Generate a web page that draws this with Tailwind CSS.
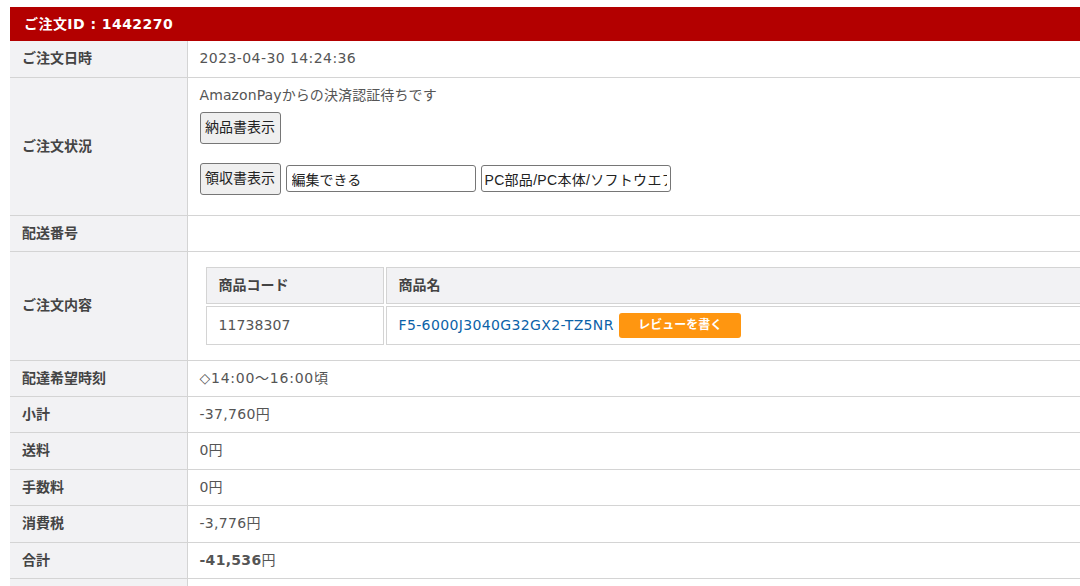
<!DOCTYPE html>
<html lang="ja">
<head>
  <meta charset="UTF-8" />
  <title>ご注文詳細</title>
  <script src="https://cdn.jsdelivr.net/npm/@tailwindcss/browser@4"></script>
</head>
<body class="bg-white overflow-hidden h-[586px] font-['DejaVu_Sans','Noto_Sans_CJK_JP',sans-serif] text-[14px] text-[#555]">
  <div class="pt-[7px] pl-[10px] w-[1200px]">
    <div class="h-[34px] bg-[#b30000] text-white font-bold flex items-center pl-[14px] tracking-[0.45px]">ご注文ID : 1442270</div>

    <table class="w-full border-collapse table-fixed">
      <tbody>
        <tr class="h-[36px] border-b border-[#d4d4d4]">
          <th class="w-[177px] bg-[#f2f2f4] border-r border-[#d4d4d4] text-left pl-[12px] text-[#444]">ご注文日時</th>
          <td class="pl-[12px] tracking-[0.42px]">2023-04-30 14:24:36</td>
        </tr>
        <tr class="h-[138px] border-b border-[#d4d4d4]">
          <th class="bg-[#f2f2f4] border-r border-[#d4d4d4] text-left pl-[12px] text-[#444]">ご注文状況</th>
          <td class="pl-[12px] align-top">
            <p class="mt-[7px] leading-[20px] tracking-[0.1px]">AmazonPayからの決済認証待ちです</p>
            <button class="block mt-[7px] w-[81px] h-[32px] bg-[#efefef] border border-[#767676] rounded-[3px] text-[#222] text-[14px]">納品書表示</button>
            <div class="flex items-center gap-[5px] mt-[19px]">
              <button class="w-[81px] h-[32px] bg-[#efefef] border border-[#767676] rounded-[3px] text-[#222] text-[14px]">領収書表示</button>
              <input value="編集できる" class="w-[190px] h-[27px] px-[5px] bg-white border border-[#767676] rounded-[3px] text-[#222] text-[14px]" />
              <input value="PC部品/PC本体/ソフトウエア" class="w-[190px] h-[27px] px-[3px] bg-white border border-[#767676] rounded-[3px] text-[#222] text-[14px] tracking-[0.3px] font-['Liberation_Sans','Noto_Sans_CJK_JP',sans-serif]" />
            </div>
          </td>
        </tr>
        <tr class="h-[36px] border-b border-[#d4d4d4]">
          <th class="bg-[#f2f2f4] border-r border-[#d4d4d4] text-left pl-[12px] text-[#444]">配送番号</th>
          <td></td>
        </tr>
        <tr class="h-[109px] border-b border-[#d4d4d4]">
          <th class="bg-[#f2f2f4] border-r border-[#d4d4d4] text-left pl-[12px] text-[#444]">ご注文内容</th>
          <td class="pl-[16px]">
            <table class="w-[1000px] border-separate border-spacing-[2px] table-fixed -my-[2px]">
              <tbody>
                <tr class="h-[37px]">
                  <th class="w-[178px] bg-[#f2f2f4] border border-[#d4d4d4] text-left pl-[12px] text-[#444]">商品コード</th>
                  <th class="bg-[#f2f2f4] border border-[#d4d4d4] text-left pl-[12px] text-[#444]">商品名</th>
                </tr>
                <tr class="h-[39px]">
                  <td class="border border-[#d4d4d4] pl-[12px] tracking-[0.1px]">11738307</td>
                  <td class="border border-[#d4d4d4] pl-[12px]">
                    <a href="#" class="text-[#0b62a8] tracking-[0.37px]">F5-6000J3040G32GX2-TZ5NR</a>
                    <a href="#" class="inline-block align-middle ml-[1px] w-[122px] h-[25px] leading-[25px] bg-[#ff9610] rounded-[3px] text-white text-center text-[12px] font-bold">レビューを書く</a>
                  </td>
                </tr>
              </tbody>
            </table>
          </td>
        </tr>
        <tr class="h-[36px] border-b border-[#d4d4d4]">
          <th class="bg-[#f2f2f4] border-r border-[#d4d4d4] text-left pl-[12px] text-[#444]">配達希望時刻</th>
          <td class="pl-[12px] tracking-[0.75px]">◇14:00～16:00頃</td>
        </tr>
        <tr class="h-[36px] border-b border-[#d4d4d4]">
          <th class="bg-[#f2f2f4] border-r border-[#d4d4d4] text-left pl-[12px] text-[#444]">小計</th>
          <td class="pl-[12px] tracking-[0.3px]">-37,760円</td>
        </tr>
        <tr class="h-[37px] border-b border-[#d4d4d4]">
          <th class="bg-[#f2f2f4] border-r border-[#d4d4d4] text-left pl-[12px] text-[#444]">送料</th>
          <td class="pl-[12px]">0円</td>
        </tr>
        <tr class="h-[36px] border-b border-[#d4d4d4]">
          <th class="bg-[#f2f2f4] border-r border-[#d4d4d4] text-left pl-[12px] text-[#444]">手数料</th>
          <td class="pl-[12px]">0円</td>
        </tr>
        <tr class="h-[37px] border-b border-[#d4d4d4]">
          <th class="bg-[#f2f2f4] border-r border-[#d4d4d4] text-left pl-[12px] text-[#444]">消費税</th>
          <td class="pl-[12px] tracking-[0.3px]">-3,776円</td>
        </tr>
        <tr class="h-[36px] border-b border-[#d4d4d4]">
          <th class="bg-[#f2f2f4] border-r border-[#d4d4d4] text-left pl-[12px] text-[#444]">合計</th>
          <td class="pl-[12px] tracking-[0.3px]"><b>-41,536</b>円</td>
        </tr>
        <tr class="h-[36px]">
          <th class="bg-[#f2f2f4] border-r border-[#d4d4d4]"></th>
          <td></td>
        </tr>
      </tbody>
    </table>
  </div>
</body>
</html>
